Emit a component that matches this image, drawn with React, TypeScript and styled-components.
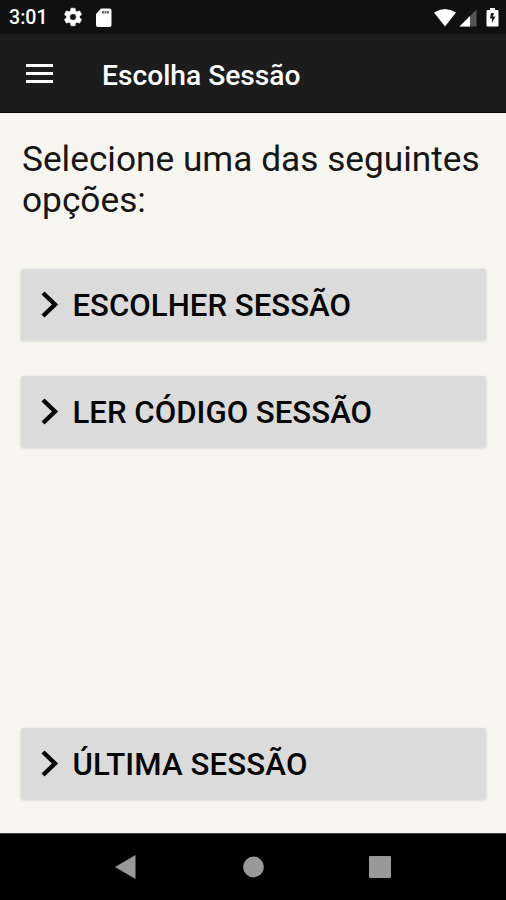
import React from "react";
import styled, { createGlobalStyle } from "styled-components";

const Global = createGlobalStyle`
  * { box-sizing: border-box; }
  body { margin: 0; font-family: Roboto, "Liberation Sans", sans-serif; background: #f7f5f0; }
`;
const Screen = styled.div`
  width: 506px; height: 900px; display: flex; flex-direction: column;
  background: #f7f5f0; overflow: hidden;
`;
const StatusBar = styled.header`
  height: 34px; background: #101010; color: #fff; display: flex; align-items: center;
  padding: 0 7px 0 9px; flex: none;
`;
const Clock = styled.span`
  font-size: 19.6px; font-weight: 500; line-height: 34px; width: 53px; padding-top: 2px;
`;
const StatusGroup = styled.div<{ $end?: boolean }>`
  display: flex; align-items: center; margin-left: ${(p) => (p.$end ? "auto" : "0")};
`;
const Toolbar = styled.div`
  height: 79px; background: #1c1c1c; color: #fff; display: flex; align-items: center;
  padding: 1px 26px 0; flex: none; border-bottom: 1px solid #080808;
`;
const Title = styled.h1`
  margin: 4px 0 0 49px; font-size: 28.2px; font-weight: 500; line-height: 34px; white-space: nowrap;
`;
const Content = styled.main`
  flex: 1; display: flex; flex-direction: column; padding: 26px 20px 34px 21px;
`;
const Prompt = styled.p`
  margin: 0 0 48px 1px; font-size: 35.25px; line-height: 41px; color: #161616; white-space: nowrap;
`;
const Option = styled.button<{ $last?: boolean }>`
  height: 71px; flex: none; display: flex; align-items: center; border: 0; border-radius: 2px;
  margin: ${(p) => (p.$last ? "auto 0 0" : "0 0 36px")}; padding: 0 0 0 20px;
  background: #dbdbdb; box-shadow: 0 1px 3px rgba(0,0,0,.16);
  font-family: inherit; font-size: 31.2px; font-weight: 500; color: #060606; text-align: left;
`;
const Label = styled.span<{ $spaced?: boolean }>`
  margin-left: 13.500px; padding-top: 1px; letter-spacing: ${(p) => (p.$spaced ? "0.12px" : "0")};
`;
const NavBar = styled.nav`
  height: 67px; background: #000; display: flex; align-items: center; justify-content: center;
  flex: none; gap: 105px; border-top: 1px solid #444;
`;

const Chevron = () => (
  <svg width="18" height="28" viewBox="0 0 18 28" fill="none" stroke="#060606" strokeWidth="4.4">
    <path d="M2 2 14 13.500 2 25" />
  </svg>
);

export default function App() {
  return (
    <Screen>
      <Global />
      <StatusBar>
        <Clock>3:01</Clock>
        <StatusGroup>
          <svg width="22" height="22" viewBox="0 0 24 24" fill="#fff" stroke="#fff" strokeWidth="0.6">
            <path d="M19.14 12.94c.04-.3.06-.61.06-.94s-.02-.64-.07-.94l2.03-1.58a.49.49 0 0 0 .12-.61l-1.92-3.32a.49.49 0 0 0-.59-.22l-2.39.96a7 7 0 0 0-1.62-.94l-.36-2.54a.48.48 0 0 0-.48-.41h-3.84a.48.48 0 0 0-.47.41l-.36 2.54c-.59.24-1.13.57-1.62.94l-2.39-.96a.48.48 0 0 0-.59.22L2.74 8.87a.48.48 0 0 0 .12.61l2.03 1.58a7 7 0 0 0 0 1.88l-2.03 1.58a.49.49 0 0 0-.12.61l1.92 3.32c.12.22.37.29.59.22l2.39-.96c.5.38 1.03.7 1.62.94l.36 2.54c.05.24.24.41.48.41h3.84c.24 0 .44-.17.47-.41l.36-2.54c.59-.24 1.13-.56 1.62-.94l2.39.96c.22.08.47 0 .59-.22l1.92-3.32a.49.49 0 0 0-.12-.61zM12 15.6a3.6 3.6 0 1 1 0-7.2 3.6 3.6 0 0 1 0 7.2z" />
          </svg>
          <svg width="32" height="22" viewBox="0 0 32 22">
            <path fill="#fff" d="M12 8 17 2.500h8.500q2 0 2 2v14.500q0 2-2 2H14q-2 0-2-2z" />
            <path fill="#666" d="M18 5h2v2.500h-2zM20.500 5h2v2.500h-2zM23 5h2v2.500h-2z" />
          </svg>
        </StatusGroup>
        <StatusGroup $end>
          <svg width="65" height="22" viewBox="0 0 65 22">
            <path fill="#fff" d="M0 6.500Q11-.5 22 6.500L11 20.500z" />
            <path fill="#555" d="M42.500 3.500v17H25.500z" />
            <path fill="#fff" d="M36 10v10.500H25.500z" />
            <path fill="#fff" d="M52.500 5q0-1 1-1H56V2h5v2h2.500q1 0 1 1v14.500q0 1-1 1h-10q-1 0-1-1z" />
            <path fill="#222" d="M60 7h-3l-1 5.500h2V17l3.500-6.500H59z" />
          </svg>
        </StatusGroup>
      </StatusBar>
      <Toolbar>
        <svg width="27" height="20" viewBox="0 0 27 20" fill="#fff">
          <path d="M0 0h27v3H0zM0 8h27v3H0zM0 16h27v3H0z" />
        </svg>
        <Title>Escolha Sessão</Title>
      </Toolbar>
      <Content>
        <Prompt>Selecione uma das seguintes<br />opções:</Prompt>
        <Option><Chevron /><Label>ESCOLHER SESSÃO</Label></Option>
        <Option><Chevron /><Label>LER CÓDIGO SESSÃO</Label></Option>
        <Option $last><Chevron /><Label $spaced>ÚLTIMA SESSÃO</Label></Option>
      </Content>
      <NavBar>
        <svg width="22" height="26" viewBox="0 0 22 26"><path fill="#999" d="M20.500 1v24L0 13z" /></svg>
        <svg width="22" height="22" viewBox="0 0 22 22"><circle cx="11.500" cy="11" r="10.400" fill="#999" /></svg>
        <svg width="22" height="22" viewBox="0 0 22 22"><rect width="22" height="22" rx="1" fill="#999" /></svg>
      </NavBar>
    </Screen>
  );
}
